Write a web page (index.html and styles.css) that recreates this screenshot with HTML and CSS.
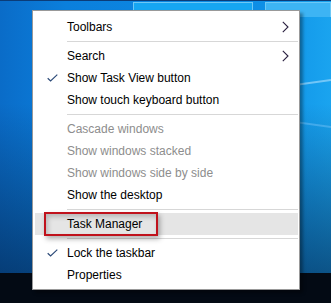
FILE: index.html
```html
<!DOCTYPE html>
<html lang="en">
<head>
    <meta charset="UTF-8">
    <meta name="viewport" content="width=device-width, initial-scale=1.0">
    <title>Taskbar Menu</title>
    <link rel="stylesheet" href="styles.css">
</head>
<body>
    <div class="screen">
        <div class="wallpaper">
            <div class="thumbs">
                <div class="thumb thumb-one"></div>
                <div class="thumb thumb-two"></div>
            </div>
            <div class="beam beam-one"></div>
            <div class="beam beam-two"></div>
        </div>
        <div class="taskbar"></div>

        <div class="menu">
            <div class="item">
                <span class="mark"></span>
                <span class="label">Toolbars</span>
                <svg class="arrow" width="7" height="12" viewBox="0 0 7 12"><path d="M0.8 0.8 L6 6 L0.8 11.2" fill="none" stroke="#2a2040" stroke-width="1.1"/></svg>
            </div>
            <div class="sep"></div>
            <div class="item">
                <span class="mark"></span>
                <span class="label">Search</span>
                <svg class="arrow" width="7" height="12" viewBox="0 0 7 12"><path d="M0.8 0.8 L6 6 L0.8 11.2" fill="none" stroke="#2a2040" stroke-width="1.1"/></svg>
            </div>
            <div class="item">
                <span class="mark"><svg width="11" height="8" viewBox="0 0 11 8"><path d="M0.7 4.2 L3.6 7 L10.3 0.6" fill="none" stroke="#2c4a78" stroke-width="1.2"/></svg></span>
                <span class="label">Show Task View button</span>
            </div>
            <div class="item">
                <span class="mark"></span>
                <span class="label">Show touch keyboard button</span>
            </div>
            <div class="sep"></div>
            <div class="item disabled">
                <span class="mark"></span>
                <span class="label">Cascade windows</span>
            </div>
            <div class="item disabled">
                <span class="mark"></span>
                <span class="label">Show windows stacked</span>
            </div>
            <div class="item disabled">
                <span class="mark"></span>
                <span class="label">Show windows side by side</span>
            </div>
            <div class="item">
                <span class="mark"></span>
                <span class="label">Show the desktop</span>
            </div>
            <div class="sep"></div>
            <div class="item hover">
                <span class="mark"></span>
                <span class="label">Task Manager</span>
                <span class="callout"></span>
            </div>
            <div class="sep"></div>
            <div class="item">
                <span class="mark"><svg width="11" height="8" viewBox="0 0 11 8"><path d="M0.7 4.2 L3.6 7 L10.3 0.6" fill="none" stroke="#2c4a78" stroke-width="1.2"/></svg></span>
                <span class="label">Lock the taskbar</span>
            </div>
            <div class="item">
                <span class="mark"></span>
                <span class="label">Properties</span>
            </div>
        </div>
    </div>
</body>
</html>
```

FILE: styles.css
```css
body {
    margin: 0;
    padding: 0;
    font-family: "Liberation Sans", Arial, sans-serif;
    overflow: hidden;
}

.screen {
    position: relative;
    width: 331px;
    height: 303px;
    display: flex;
    flex-direction: column;
}

.wallpaper {
    position: relative;
    flex: 1;
    overflow: hidden;
    background:
        linear-gradient(180deg, rgba(4, 30, 70, 0) 0%, rgba(4, 30, 70, 0) 38%, rgba(3, 30, 66, 0.6) 100%),
        linear-gradient(90deg, #0a6cc8 0%, #0b7fdc 20%, #0d8fe6 80%, #1aa4ef 100%);
}

.thumbs {
    display: flex;
    gap: 12px;
    padding: 1px 0 0 133px;
    border-top: 1px solid #0b3c78;
}

.thumb {
    height: 14px;
    background: #16a6f2;
    border: 1px solid #6cc8f6;
    border-bottom: none;
}

.thumb-one {
    width: 118px;
}

.thumb-two {
    flex: 1;
    background: #3db4f4;
}

.beam {
    position: absolute;
    right: 0;
    height: 2px;
    background: rgba(190, 230, 255, 0.55);
    transform-origin: right center;
}

.beam-one {
    top: 79px;
    width: 60px;
    transform: rotate(-8deg);
}

.beam-two {
    top: 126px;
    width: 60px;
    transform: rotate(8deg);
    background: rgba(150, 210, 255, 0.35);
}

.taskbar {
    height: 30px;
    background: #030a14;
}

.menu {
    position: absolute;
    left: 32px;
    top: 10px;
    width: 263px;
    padding: 5px 1px 3px 2px;
    background: #fff;
    border: 1px solid #999;
    box-shadow: 3px 3px 3px rgba(0, 0, 0, 0.35);
}

.item {
    position: relative;
    display: flex;
    align-items: center;
    height: 22px;
    font-size: 12px;
    color: #000;
}

.item.disabled {
    color: #8d8d8d;
}

.item.hover {
    background: #e5e5e5;
}

.mark {
    width: 32px;
    display: flex;
    justify-content: center;
    padding-left: 2px;
    box-sizing: border-box;
}

.label {
    flex: 1;
}

.arrow {
    margin-right: 9px;
}

.sep {
    height: 1px;
    margin: 3px 0 3px 32px;
    background: #d7d7d7;
}

.callout {
    position: absolute;
    left: 9px;
    top: -1px;
    width: 110px;
    height: 20px;
    border: 2px solid #c0121c;
    box-shadow: 2px 3px 5px rgba(0, 0, 0, 0.3), inset 2px 3px 5px rgba(0, 0, 0, 0.2);
}
```
